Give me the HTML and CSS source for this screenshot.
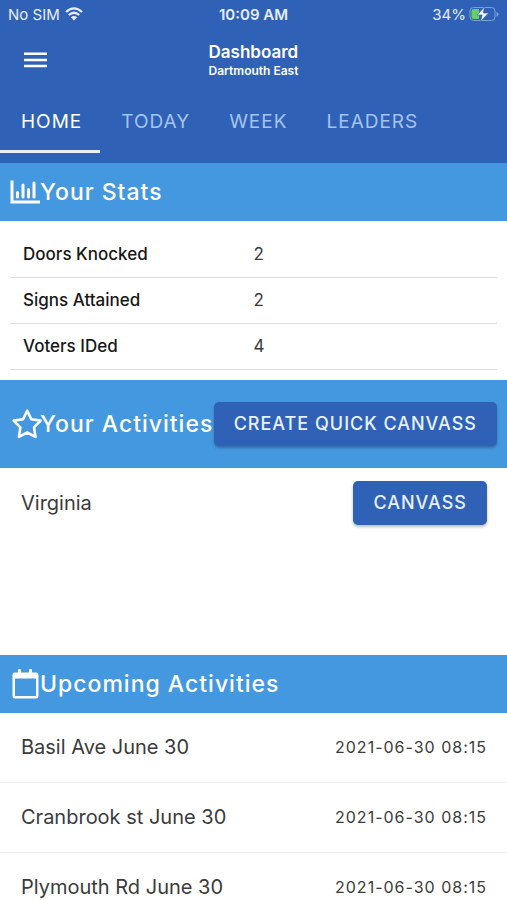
FILE: index.html
```html
<!DOCTYPE html>
<html lang="en">
<head>
<meta charset="utf-8">
<meta name="viewport" content="width=device-width, initial-scale=1">
<title>Dashboard</title>
<link rel="stylesheet" href="styles.css">
</head>
<body>
<header class="app-header">
  <div class="status-bar">
    <div class="status-left">
      <span>No SIM</span>
      <svg class="wifi" viewBox="0 0 18 14" aria-hidden="true"><path d="M1 5Q9-2.200 17 5M3.800 8Q9 3.500 14.200 8" fill="none" stroke="currentColor" stroke-width="2.300"/><path d="M5.900 10.200Q9 7.700 12.100 10.200L9 13.500Z" fill="currentColor"/></svg>
    </div>
    <time class="clock">10:09 AM</time>
    <div class="status-right">
      <span>34%</span>
      <svg class="battery" viewBox="0 0 30 16" aria-hidden="true"><rect x="1" y="1.500" width="25" height="13" rx="3.500" fill="none" stroke="#7fa0d6"/><path d="M27.500 6v4.500q2-.6 2-2.250T27.500 6Z" fill="#7fa0d6"/><path d="M4.500 3H10v10H4.500Q2.500 13 2.500 11V5Q2.500 3 4.500 3Z" fill="#65cf68"/><path d="M15.500 1 8 9h5.200L11.500 15.500 19.500 7H14.200Z" fill="#fff" stroke="#2f62b7" stroke-width=".6"/></svg>
    </div>
  </div>
  <div class="toolbar">
    <button class="menu-button" type="button" aria-label="Menu"><svg viewBox="0 0 24 16" aria-hidden="true"><path d="M0 1.700h23M0 7.900h23M0 14.100h23" stroke="currentColor" stroke-width="2.500"/></svg></button>
    <div class="heading">
      <h1>Dashboard</h1>
      <p>Dartmouth East</p>
    </div>
  </div>
  <nav class="tabs">
    <a class="tab active" href="#home" aria-current="page">HOME</a>
    <a class="tab" href="#today">TODAY</a>
    <a class="tab" href="#week">WEEK</a>
    <a class="tab" href="#leaders">LEADERS</a>
  </nav>
</header>
<main>
  <section>
    <div class="section-bar">
      <svg class="section-icon" viewBox="0 0 30 30" aria-hidden="true"><path d="M2 3.500V25H30" fill="none" stroke="currentColor" stroke-width="3"/><path d="M7.500 15.500V20M13 8V20M18.500 12.500V20M24 6V20" stroke="currentColor" stroke-width="3" stroke-linecap="round"/></svg>
      <h2>Your Stats</h2>
    </div>
    <table class="stats">
      <tbody>
        <tr><th scope="row">Doors Knocked</th><td>2</td></tr>
        <tr><th scope="row">Signs Attained</th><td>2</td></tr>
        <tr><th scope="row">Voters IDed</th><td>4</td></tr>
      </tbody>
    </table>
  </section>
  <section class="activities">
    <div class="section-bar tall">
      <svg class="section-icon" viewBox="0 0 30 30" aria-hidden="true"><path d="M17.200 1.700 21.300 10.200 30.700 11.600 24 18.300 25.500 27.900 17.200 23.500 8.900 27.900 10.400 18.300 3.700 11.600 13.100 10.200Z" fill="none" stroke="currentColor" stroke-width="2.600" stroke-linejoin="round"/></svg>
      <h2>Your Activities</h2>
      <button class="button" type="button">CREATE QUICK CANVASS</button>
    </div>
    <div class="canvass-row">
      <span>Virginia</span>
      <button class="button" type="button">CANVASS</button>
    </div>
  </section>
  <section>
    <div class="section-bar">
      <svg class="section-icon" viewBox="0 0 30 30" aria-hidden="true"><path d="M5 3.500H8V1q0-1 1.500-1t1.500 1v2.500h8V1q0-1 1.500-1t1.500 1v2.500h3.500q3 0 3 3V27q0 2.500-2.500 2.500H5Q2.500 29.500 2.500 27V6q0-2.500 2.500-2.500ZM5 9.500V27H26V9.500Z" fill="currentColor" fill-rule="evenodd"/></svg>
      <h2>Upcoming Activities</h2>
    </div>
    <ul class="upcoming">
      <li><span>Basil Ave June 30</span><time>2021-06-30 08:15</time></li>
      <li><span>Cranbrook st June 30</span><time>2021-06-30 08:15</time></li>
      <li><span>Plymouth Rd June 30</span><time>2021-06-30 08:15</time></li>
    </ul>
  </section>
</main>
</body>
</html>
```
FILE: styles.css
```css
:root {
  --navy: #2f62b7;
  --sky: #4498df;
}

* {
  box-sizing: border-box;
}

body {
  margin: 0;
  font-family: Inter, "Liberation Sans", sans-serif;
  color: #3b3b3b;
  background: #fff;
}

h1,
h2,
p,
ul {
  margin: 0;
  padding: 0;
}

svg {
  display: block;
  overflow: visible;
}

.app-header {
  color: #fff;
  background: var(--navy);
}

.status-bar {
  display: grid;
  grid-template-columns: 1fr auto 1fr;
  align-items: center;
  height: 28px;
  padding: 0 8px;
  font-size: 15px;
  color: #e6eefb;
}

.status-left,
.status-right {
  display: flex;
  align-items: center;
  gap: 5px;
}

.status-right {
  justify-content: flex-end;
  gap: 3px;
}

.wifi {
  width: 18px;
  height: 14px;
}

.battery {
  width: 30px;
  height: 16px;
}

.clock {
  font-weight: 600;
}

.toolbar {
  display: grid;
  grid-template-columns: 1fr auto 1fr;
  align-items: center;
  height: 64px;
}

.menu-button {
  justify-self: start;
  margin-left: 24px;
  padding: 0;
  border: 0;
  color: inherit;
  background: none;
}

.menu-button svg {
  width: 24px;
  height: 16px;
}

.heading h1 {
  font-size: 17px;
  font-weight: 600;
  line-height: 22px;
}

.heading p {
  font-size: 12px;
  font-weight: 600;
  line-height: 16px;
}

.tabs {
  display: flex;
  height: 71px;
}

.tab {
  height: 61px;
  padding: 0 18px 0 21px;
  border-bottom: 3px solid transparent;
  font-size: 19px;
  line-height: 60px;
  letter-spacing: 1px;
  color: #a6c3ef;
  text-decoration: none;
}

.tab.active {
  border-color: #e9f1fd;
  color: #fff;
}

.section-bar {
  display: flex;
  align-items: center;
  min-height: 58px;
  padding: 0 10px;
  color: #fff;
  background: var(--sky);
}

.section-bar.tall {
  min-height: 88px;
}

.section-icon {
  flex: none;
  width: 30px;
  height: 30px;
}

h2 {
  font-size: 23px;
  font-weight: 500;
  line-height: 32px;
  letter-spacing: 1px;
  white-space: nowrap;
}

.stats {
  width: calc(100% - 20px);
  margin: 10px;
  border-collapse: collapse;
  table-layout: fixed;
  font-size: 17px;
}

.stats th,
.stats td {
  height: 46px;
  padding: 0 13px;
  border-bottom: 1px solid #dedede;
  text-align: left;
}

.stats td {
  padding-left: 0;
}

.stats th {
  font-weight: 500;
  color: #171717;
}

.button {
  flex: none;
  height: 44px;
  margin-left: auto;
  padding: 0 20px;
  border: 0;
  border-radius: 5px;
  font: 500 18px/24px Inter, "Liberation Sans", sans-serif;
  letter-spacing: 1px;
  color: #e9f1ff;
  background: var(--navy);
  box-shadow: 0 2px 3px #00000044;
}

.activities {
  min-height: 275px;
}

.canvass-row,
.upcoming li {
  display: flex;
  align-items: center;
  justify-content: space-between;
  height: 70px;
  padding: 0 20px 0 21px;
  font-size: 20px;
}

.upcoming li {
  border-bottom: 1px solid #f1f1f1;
}

.upcoming time {
  font-size: 16px;
  letter-spacing: 1px;
}
```
